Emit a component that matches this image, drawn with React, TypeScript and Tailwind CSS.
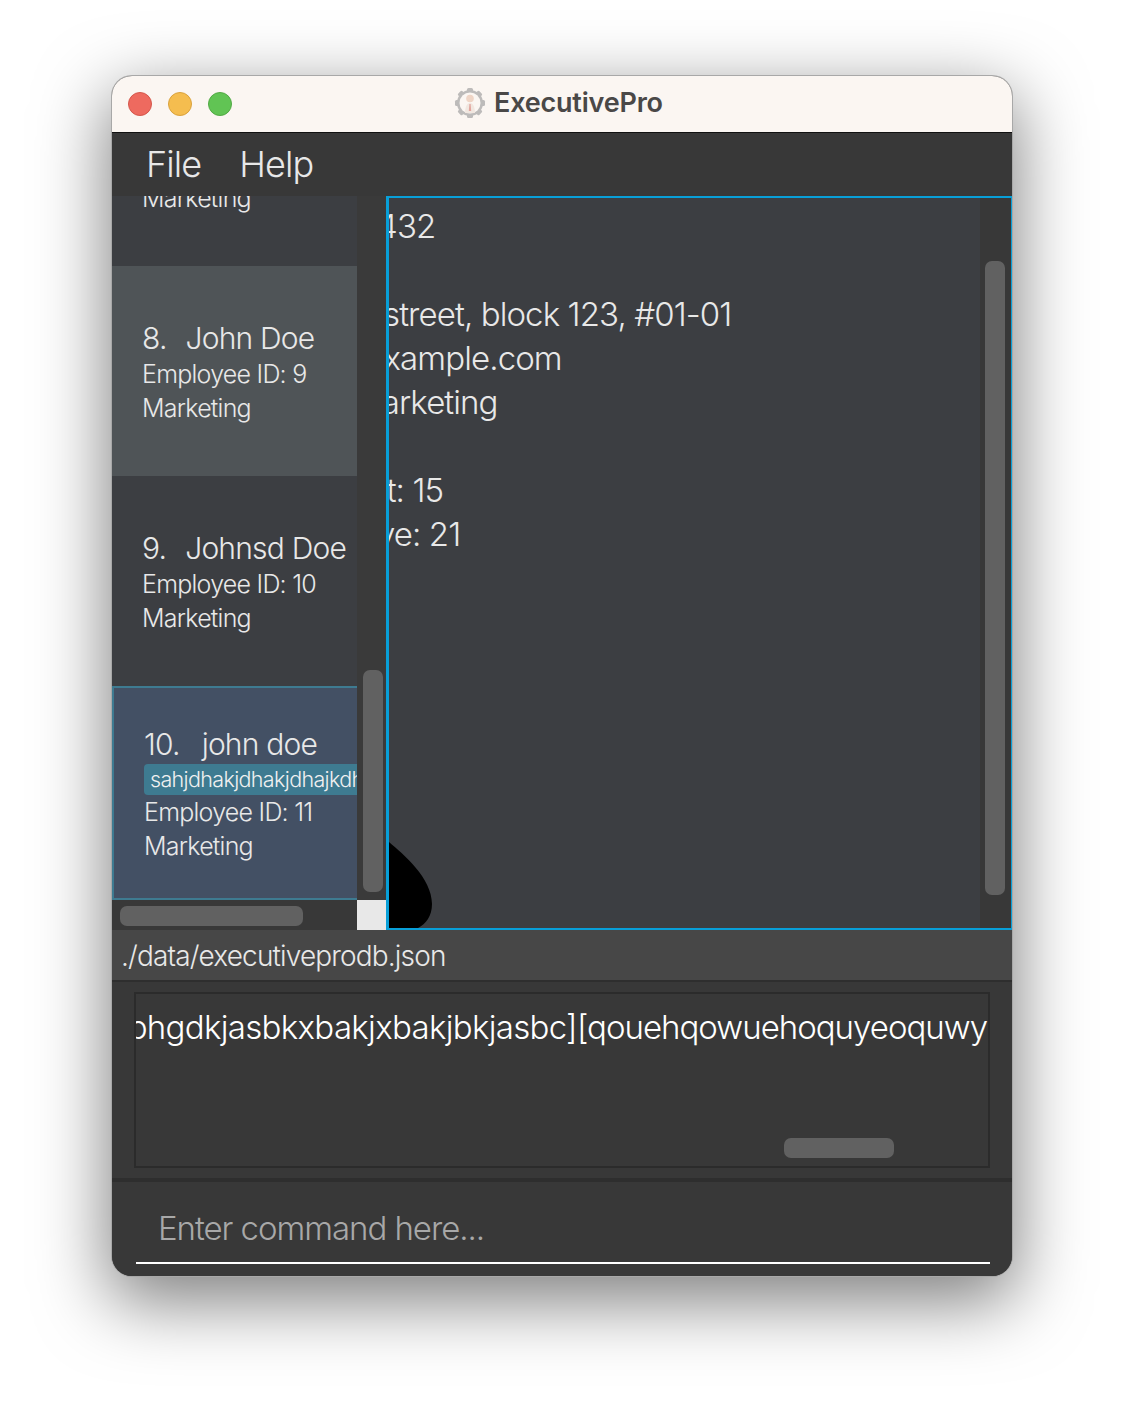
const FONT = "font-['Inter','Liberation_Sans',sans-serif]";

const TrafficLights = () => (
  <div className="flex items-center gap-[16px]">
    <div className="w-[24px] h-[24px] rounded-full bg-[#ee6a5f] border border-[#d4574c]" />
    <div className="w-[24px] h-[24px] rounded-full bg-[#f5bd4f] border border-[#d9a23d]" />
    <div className="w-[24px] h-[24px] rounded-full bg-[#61c454] border border-[#52a945]" />
  </div>
);

const Logo = () => (
  <svg width="32" height="32" viewBox="0 0 32 32">
    <g fill="#bdbbba">
      <rect x="13" y="1" width="6" height="30" rx="1.5" />
      <rect x="13" y="1" width="6" height="30" rx="1.5" transform="rotate(45 16 16)" />
      <rect x="13" y="1" width="6" height="30" rx="1.5" transform="rotate(90 16 16)" />
      <rect x="13" y="1" width="6" height="30" rx="1.5" transform="rotate(135 16 16)" />
      <circle cx="16" cy="16" r="13" />
    </g>
    <circle cx="16" cy="16" r="10.5" fill="#fbf6f2" />
    <circle cx="16" cy="11.5" r="3.8" fill="#efd5c6" />
    <path d="M11 26c0-6 2-10 5-10s5 4 5 10z" fill="#f1e7e0" />
    <path d="M15.4 17h1.2l.6 7h-2.4z" fill="#e2a59d" />
  </svg>
);

const PersonCard = ({ index, name, id, tint }: { index: string; name: string; id: string; tint: string }) => (
  <div className={`h-[210px] shrink-0 pl-[30px] pt-[52px] ${tint}`}>
    <div className="text-[30px] leading-[40px] tracking-[-0.8px] text-[#e8e8e8] font-light whitespace-nowrap">
      {index}.<span className="inline-block w-[19px]" />
      {name}
    </div>
    <div className="-mt-[1px] text-[25px] leading-[34px] tracking-[-0.75px] text-[#e8e8e8] font-light whitespace-nowrap">Employee ID: {id}</div>
    <div className="text-[25px] leading-[34px] tracking-[-0.75px] text-[#e8e8e8] font-light">Marketing</div>
  </div>
);

const detailLines = ["1432", "", "street, block 123, #01-01", "example.com", "Marketing", "", "Left: 15", "Leave: 21"];
const detailOffsets = ["-ml-[24px]", "", "-ml-[6px]", "-ml-[23px]", "-ml-[36px]", "", "-ml-[48px]", "-ml-[65px]"];

export default function App() {
  return (
    <div className={`${FONT} w-full h-[1424px] bg-white flex justify-center pt-[76px]`}>
      <div className="w-[900px] h-[1200px] rounded-[20px] overflow-hidden flex flex-col bg-[#383838] shadow-[0_22px_70px_4px_rgba(0,0,0,0.5)] ring-1 ring-[#a8a8a8]">
        {/* title bar */}
        <div className="relative h-[57px] shrink-0 bg-[#fbf6f2] border-b border-[#111111] flex items-center pl-[16px]">
          <TrafficLights />
          <div className="absolute left-[342px] top-[7px] flex items-center gap-[8px]">
            <Logo />
            <span className="text-[27px] font-semibold tracking-[-0.2px] text-[#4a4847]">ExecutivePro</span>
          </div>
        </div>

        {/* menu */}
        <div className="h-[63px] shrink-0 bg-[#383838] flex items-center pl-[34px] pb-[2px] gap-[38px] text-[36px] font-light tracking-[-0.9px] text-[#e8e8e8]">
          <span>File</span>
          <span>Help</span>
        </div>

        {/* main */}
        <div className="h-[734px] shrink-0 flex">
          <div className="w-[275px] shrink-0 flex flex-col">
            <div className="h-[704px] flex">
              <div className="w-[245px] flex flex-col overflow-hidden bg-[#3c3e42]">
                <div className="h-[70px] shrink-0 overflow-hidden pl-[30px]">
                  <div className="-mt-[15px] text-[25px] leading-[34px] tracking-[-0.75px] text-[#e8e8e8] font-light">Marketing</div>
                </div>
                <PersonCard index="8" name="John Doe" id="9" tint="bg-[#4f5457]" />
                <PersonCard index="9" name="Johnsd Doe" id="10" tint="bg-[#3c3e42]" />
                <div className="h-[214px] shrink-0 bg-[#435064] border-2 border-r-0 border-[#3e7b91] pl-[30px] pt-[36px]">
                  <div className="text-[30px] leading-[40px] tracking-[-0.8px] text-[#e8e8e8] font-light whitespace-nowrap">
                    10.<span className="inline-block w-[22px]" />
                    john doe
                  </div>
                  <div className="h-[31px] rounded-l-[4px] bg-[#3e7b91] pl-[6px] overflow-hidden text-[21.5px] leading-[31px] tracking-[-0.65px] text-[#f0f0f0] font-light whitespace-nowrap">
                    sahjdhakjdhakjdhajkdhajk
                  </div>
                  <div className="text-[25px] leading-[34px] tracking-[-0.75px] text-[#e8e8e8] font-light whitespace-nowrap">Employee ID: 11</div>
                  <div className="text-[25px] leading-[34px] tracking-[-0.75px] text-[#e8e8e8] font-light">Marketing</div>
                </div>
              </div>
              <div className="w-[30px] bg-[#3a3a3a] pl-[6px] pt-[474px]">
                <div className="w-[20px] h-[222px] rounded-[7px] bg-[#616161]" />
              </div>
            </div>
            <div className="h-[30px] flex">
              <div className="w-[245px] pl-[8px] pt-[6px] bg-[#383838]">
                <div className="w-[183px] h-[20px] rounded-[7px] bg-[#616161]" />
              </div>
              <div className="w-[30px] bg-[#e8e8e8]" />
            </div>
          </div>

          <div className="relative -ml-px flex-1 flex border-2 border-l-[3px] border-r border-[#089fd8] bg-[#3c3e42] overflow-hidden">
            <div className="flex-1 overflow-hidden pt-[6px] text-[33px] leading-[44px] tracking-[-0.9px] font-light text-[#e8e8e8]">
              {detailLines.map((line, i) => (
                <div key={i} className={`h-[44px] whitespace-nowrap ${detailOffsets[i]}`}>
                  {line}
                </div>
              ))}
            </div>
            <div className="w-[31px] shrink-0 bg-[#383838] pl-[5px] pt-[63px]">
              <div className="w-[20px] h-[634px] rounded-[7px] bg-[#616161]" />
            </div>
            <svg className="absolute left-0 bottom-0" width="44" height="86" viewBox="0 0 44 86">
              <path d="M0 0C14 12 43 36 43 62C43 74 37 82 29 86H0z" fill="#000" />
            </svg>
          </div>
        </div>

        {/* status */}
        <div className="h-[52px] shrink-0 bg-[#474747] border-b-2 border-[#2e2e2e] pl-[9px] text-[28px] leading-[52px] tracking-[-0.85px] font-light text-[#e8e8e8]">
          ./data/executiveprodb.json
        </div>

        {/* result */}
        <div className="h-[200px] shrink-0 bg-[#383838] pl-[22px] pr-[22px] pt-[10px] pb-[10px] border-b-4 border-[#2e2e2e]">
          <div className="h-[176px] border-2 border-[#2b2b2b] flex flex-col justify-between overflow-hidden">
            <div className="flex justify-end overflow-hidden pr-[1px] pt-[11px] text-[33px] leading-[44px] font-light text-white whitespace-nowrap">
              <span className="shrink-0 tracking-[-0.68px]">phgdkjasbkxbakjxbakjbkjasbc]</span>
              <span className="shrink-0 tracking-[-1px]">[qouehqowuehoquyeoquwy</span>
            </div>
            <div className="h-[28px] pl-[648px]">
              <div className="w-[110px] h-[20px] rounded-[7px] bg-[#616161]" />
            </div>
          </div>
        </div>

        {/* command */}
        <div className="flex-1 bg-[#383838] px-[22px] pt-[22px]">
          <div className="h-[60px] ml-[2px] border-b-2 border-white pl-[22px] text-[33px] leading-[48px] tracking-[-1.05px] font-light text-[#a8a8a8]">
            Enter command here...
          </div>
        </div>
      </div>
    </div>
  );
}
